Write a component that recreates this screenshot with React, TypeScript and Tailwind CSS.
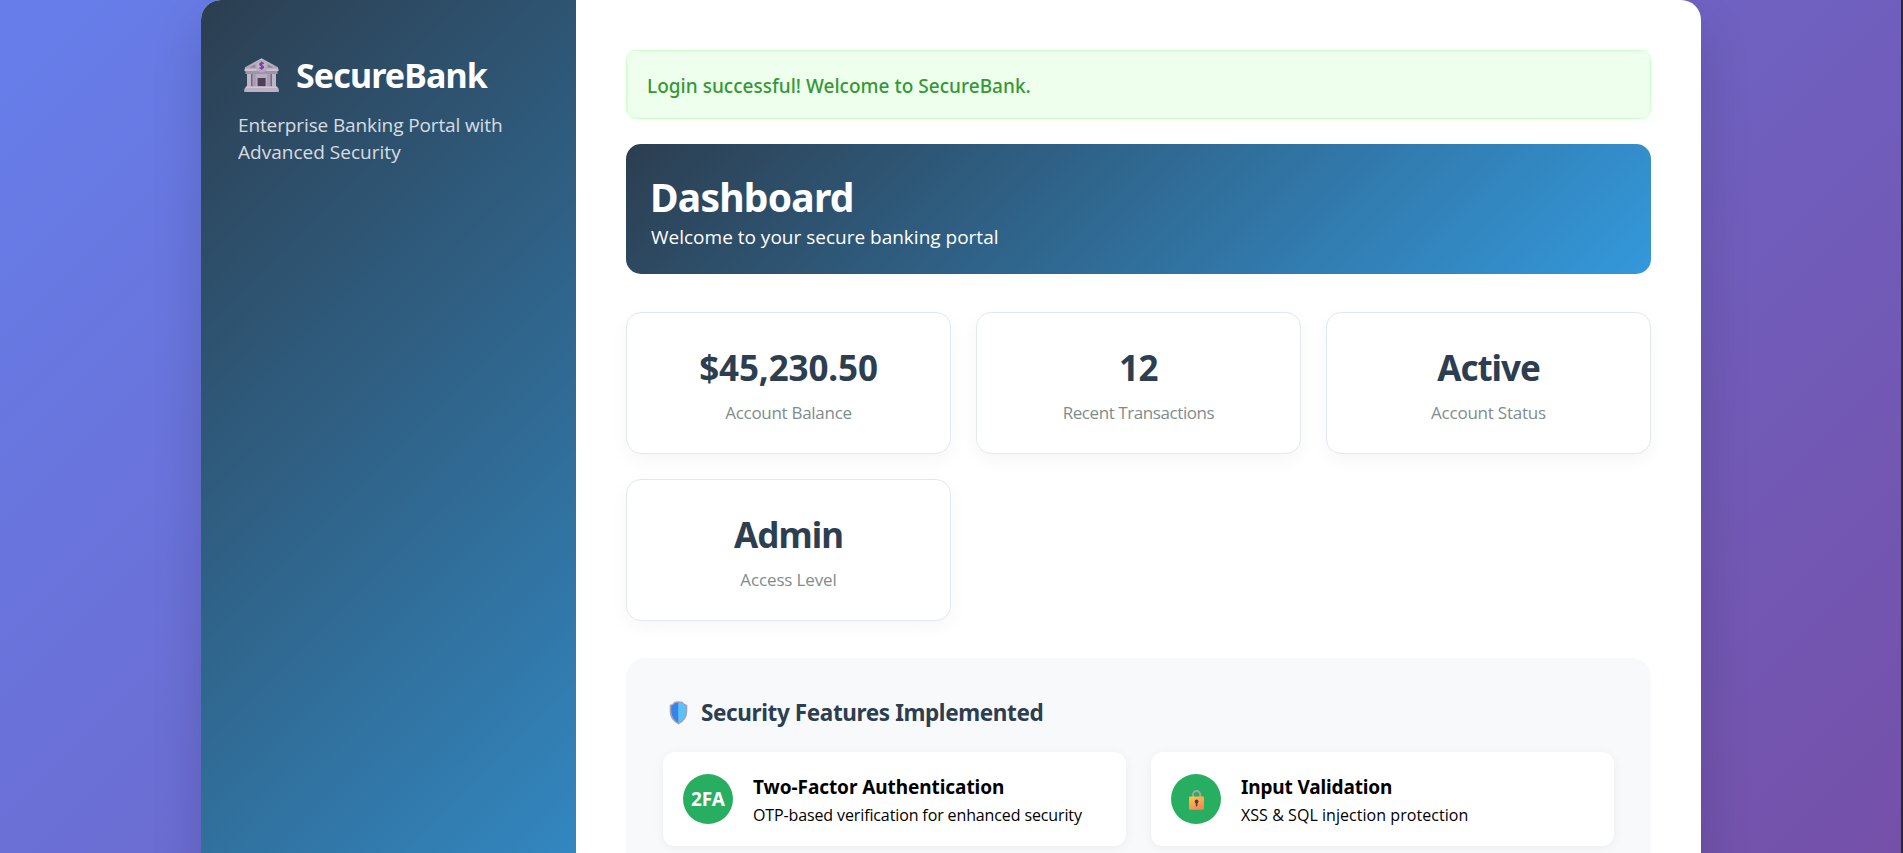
import type { ReactNode } from "react";

function BankIcon() {
  return (
    <svg width="35" height="34" viewBox="0 0 35 34" className="shrink-0">
      <defs>
        <linearGradient id="stone" x1="0" y1="0" x2="0" y2="1">
          <stop offset="0" stopColor="#cdc2d2" />
          <stop offset="1" stopColor="#a99db3" />
        </linearGradient>
      </defs>
      <rect x="3" y="15" width="29" height="14" fill="#756b80" />
      <path d="M17.5 0.3 34 9.2V11H1V9.2Z" fill="url(#stone)" />
      <path d="M17.5 3 29.5 9.6H5.5Z" fill="#8f8299" />
      <rect x="0.5" y="10.6" width="34" height="2.6" rx="0.5" fill="#cbc1d0" />
      <rect x="1.5" y="13" width="32" height="3" fill="#9f93a9" />
      <circle cx="17.6" cy="8" r="6.4" fill="#b3a7ba" />
      <circle cx="17.6" cy="7.6" r="5" fill="#bfb4c6" />
      <path d="M19.8 5.7C18.4 4.6 15.8 4.9 15.9 6.4C16 7.9 19.5 7.4 19.5 9.2C19.4 10.6 16.8 10.7 15.4 9.6M17.6 3.6V11.7" fill="none" stroke="#7546a8" strokeWidth="1.6" />
      <rect x="3" y="16" width="4" height="13" fill="#c0b5c7" />
      <rect x="8.5" y="16" width="3.5" height="13" fill="#aa9eb3" />
      <rect x="23" y="16" width="3.5" height="13" fill="#aa9eb3" />
      <rect x="28" y="16" width="4" height="13" fill="#c0b5c7" />
      <rect x="12" y="16" width="11" height="13" fill="#b8acc0" />
      <rect x="13.6" y="20" width="8" height="8.6" fill="#4b4056" />
      <path d="M2 28.5H33L34.8 31V34H0.3V31Z" fill="#bcb0c3" />
      <rect x="2" y="28.5" width="31" height="1.6" fill="#d0c7d5" />
    </svg>
  );
}

function ShieldIcon() {
  return (
    <svg width="19" height="24" viewBox="0 0 19 24" className="shrink-0">
      <path
        d="M5.4 0.7Q9.5 -0.3 13.6 0.7Q14.6 3 18.3 4V11Q18 19 9.5 23.5Q1 19 0.7 11V4Q4.4 3 5.4 0.7Z"
        fill="#a6a0b4"
      />
      <path d="M9.5 1.7Q7.7 1.7 6.3 2Q5.1 4.2 2.3 5V11Q2.7 17.8 9.5 21.7Z" fill="#3484ea" />
      <path d="M9.5 1.7Q11.3 1.7 12.7 2Q13.9 4.2 16.7 5V11Q16.3 17.8 9.5 21.7Z" fill="#54c5fb" />
    </svg>
  );
}

function LockIcon() {
  return (
    <svg width="15" height="20" viewBox="0 0 15 20" className="mt-[2px]">
      <defs>
        <linearGradient id="brass" x1="0.2" y1="0" x2="0.7" y2="1">
          <stop offset="0" stopColor="#fcc54a" />
          <stop offset="1" stopColor="#fb8250" />
        </linearGradient>
      </defs>
      <path d="M4 8V4.6A3.6 3.6 0 0 1 11.2 4.6V8" fill="none" stroke="#aaa3b5" strokeWidth="1.8" />
      <rect x="0.1" y="6.6" width="14.9" height="13.2" rx="1" fill="url(#brass)" />
      <circle cx="7.6" cy="11.5" r="1.9" fill="#4e3b5c" />
      <rect x="6.8" y="12" width="1.6" height="4.5" rx="0.7" fill="#4e3b5c" />
    </svg>
  );
}

function Stat({ value, label, valueCls, labelCls }: { value: string; label: string; valueCls: string; labelCls: string }) {
  return (
    <div className="h-[142px] rounded-[15px] border border-[#e2e8f0] bg-white pt-[31px] text-center shadow-[0_6px_19px_rgba(0,0,0,0.04)]">
      <div className={`font-['Noto_Sans',sans-serif] text-[35px] leading-[48px] font-bold text-[#2c3e50] ${valueCls}`}>{value}</div>
      <div className={`mt-[9px] text-[17px] leading-6 text-[#7f8c8d] ${labelCls}`}>{label}</div>
    </div>
  );
}

function Feature({ icon, title, text, titleCls, textCls }: { icon: ReactNode; title: string; text: string; titleCls: string; textCls: string }) {
  return (
    <div className="flex h-[94px] gap-5 rounded-[12px] bg-white px-5 shadow-[0_2px_12px_rgba(0,0,0,0.05)]">
      <div className="mt-[22px] flex size-[50px] shrink-0 items-center justify-center rounded-full bg-[#27ae60] font-['Noto_Sans',sans-serif] text-[19px] leading-none font-bold text-white">
        {icon}
      </div>
      <div className="pt-[22px] text-black">
        <div className={`font-['Noto_Sans',sans-serif] text-[19px] leading-[27px] font-bold ${titleCls}`}>{title}</div>
        <div className={`mt-[3px] text-[16px] leading-[23px] ${textCls}`}>{text}</div>
      </div>
    </div>
  );
}

export default function App() {
  return (
    <div className="h-[853px] w-[1903px] overflow-hidden bg-[#2b2b2b] font-['Open_Sans',sans-serif]">
      <div className="h-[1150px] w-[1901px] bg-[linear-gradient(135deg,#667eea_0%,#764ba2_100%)] pl-[201px]">
        <div className="flex h-[1150px] w-[1500px] overflow-hidden rounded-[20px] bg-white shadow-[0_25px_50px_rgba(0,0,0,0.15)]">
          <aside className="w-[375px] shrink-0 bg-[linear-gradient(135deg,#2c3e50_0%,#3498db_100%)] px-[37px] pt-[51px] text-white">
            <h1 className="flex h-12 gap-[17px] pl-[6px] font-['Noto_Sans',sans-serif] text-[34px] leading-[48px] font-bold tracking-[-0.88px]">
              <span className="pt-[7px]">
                <BankIcon />
              </span>
              SecureBank
            </h1>
            <p className="mt-[13px] text-[19px] leading-[27px] tracking-[-0.12px] opacity-80">
              Enterprise Banking Portal with
              <br />
              <span className="tracking-[0.02px]">Advanced Security</span>
            </p>
          </aside>

          <main className="flex-1 px-[50px] pt-[50px]">
            <div className="flex h-[69px] items-center rounded-[10px] border border-[#ccffcc] bg-[#eeffee] px-[20px] pt-[3px] font-['Noto_Sans',sans-serif] text-[19px] font-medium tracking-[0.02px] text-[#339933]">
              Login successful! Welcome to SecureBank.
            </div>

            <header className="mt-[25px] h-[130px] rounded-[15px] bg-[linear-gradient(135deg,#2c3e50_0%,#3498db_100%)] px-[25px] pt-[26px] text-white">
              <h2 className="-ml-px font-['Noto_Sans',sans-serif] text-[39px] leading-[53px] font-bold tracking-[-0.75px]">Dashboard</h2>
              <p className="mt-px text-[19px] leading-[27px]">Welcome to your secure banking portal</p>
            </header>

            <section className="mt-[38px] grid grid-cols-3 gap-[25px]">
              <Stat value="$45,230.50" label="Account Balance" valueCls="tracking-[-0.13px]" labelCls="tracking-[-0.29px]" />
              <Stat value="12" label="Recent Transactions" valueCls="tracking-[-0.6px]" labelCls="tracking-[-0.42px]" />
              <Stat value="Active" label="Account Status" valueCls="tracking-[-1.06px]" labelCls="tracking-[-0.22px]" />
              <Stat value="Admin" label="Access Level" valueCls="tracking-[-0.93px]" labelCls="tracking-[-0.14px]" />
            </section>

            <section className="mt-[37px] h-[420px] rounded-[19px] bg-[#f8f9fb] px-[37px] pt-[39px]">
              <h3 className="flex gap-[13px] pl-[6px] font-['Noto_Sans',sans-serif] text-[22.5px] leading-[31px] font-bold tracking-[-0.39px] text-[#2c3e50]">
                <span className="pt-1">
                  <ShieldIcon />
                </span>
                Security Features Implemented
              </h3>
              <div className="mt-6 grid grid-cols-2 gap-[25px]">
                <Feature icon="2FA" title="Two-Factor Authentication" text="OTP-based verification for enhanced security" titleCls="tracking-[-0.07px]" textCls="tracking-[-0.12px]" />
                <Feature icon={<LockIcon />} title="Input Validation" text="XSS &amp; SQL injection protection" titleCls="tracking-[-0.14px]" textCls="tracking-[0.05px]" />
              </div>
            </section>
          </main>
        </div>
      </div>
    </div>
  );
}
